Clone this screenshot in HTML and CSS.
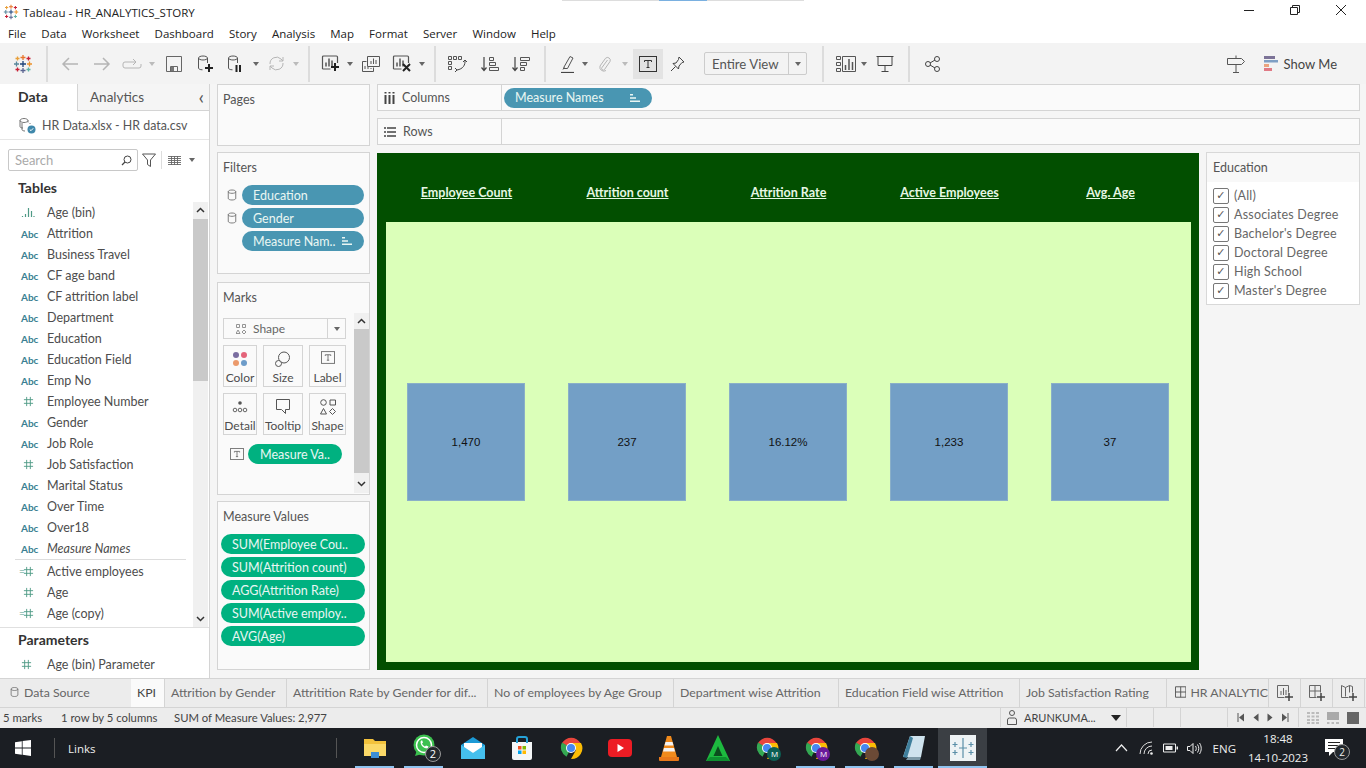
FILE: index.html
```html
<!DOCTYPE html>
<html lang="en">
<head>
    <meta charset="UTF-8">
    <title>Tableau - HR_ANALYTICS_STORY</title>
    <link rel="stylesheet" href="styles.css">
</head>
<body>
    <svg class="defs" width="0" height="0">
        <symbol id="logo" viewBox="0 0 20 20">
            <g fill="none" stroke-width="1.3">
                <path d="M10 1v5M7.5 3.5h5" stroke="#e8762d"/>
                <path d="M10 14v5M7.5 16.5h5" stroke="#5b6591"/>
                <path d="M3.5 7.5v5M1 10h5" stroke="#59879b"/>
                <path d="M16.5 7.5v5M14 10h5" stroke="#eb912b"/>
                <path d="M10 7v6M7 10h6" stroke="#1f447a"/>
                <path d="M4.5 2.5v4M2.5 4.5h4" stroke="#e8a03a"/>
                <path d="M15.5 2.5v4M13.5 4.5h4" stroke="#c72035"/>
                <path d="M4.5 13.5v4M2.5 15.5h4" stroke="#c72035"/>
                <path d="M15.5 13.5v4M13.5 15.5h4" stroke="#5fb1a5"/>
            </g>
        </symbol>
        <symbol id="cyl" viewBox="0 0 12 14">
            <path d="M1.5 3v8c0 1.2 2 2 4.5 2s4.5-.8 4.5-2V3M1.5 3c0-1.2 2-2 4.5-2s4.5.8 4.5 2-2 2-4.5 2-4.5-.8-4.5-2z" fill="none" stroke="currentColor"/>
        </symbol>
        <symbol id="hash" viewBox="0 0 12 12">
            <path d="M4 1v10M8 1v10M1 4h10M1 8h10" fill="none" stroke="currentColor"/>
        </symbol>
        <symbol id="tbox" viewBox="0 0 18 16">
            <rect x=".5" y=".5" width="17" height="15" fill="none" stroke="currentColor"/>
            <path d="M5.5 4.5h7M9 4.5v7M7.5 11.5h3M5.5 4.5V6M12.5 4.5V6" fill="none" stroke="currentColor"/>
        </symbol>
        <symbol id="sortpill" viewBox="0 0 12 10">
            <path d="M1 1h3v1.5H1zM1 4.2h6v1.5H1zM1 7.5h10V9H1z" fill="currentColor"/>
        </symbol>
        <symbol id="bars" viewBox="0 0 20 18">
            <path d="M1.5 14.5v-12a1 1 0 0 1 1-1h13a1 1 0 0 1 1 1v6M1.5 14.5h8" fill="none" stroke="#555" stroke-width="1.2"/>
            <path d="M5 12V8M8 12V4M11 12V6" fill="none" stroke="#555" stroke-width="1.5"/>
        </symbol>
        <symbol id="chrome" viewBox="0 0 24 24">
            <path d="M12 12L3 7a10.8 10.8 0 0 1 18.5 0H12z" fill="#e8453c"/>
            <path d="M12 12l-4.500 8.700A10.800 10.800 0 0 1 3 6.500z" fill="#34a853"/>
            <path d="M12 7h10a10.800 10.800 0 0 1-10 16l5-9z" fill="#fbbc05"/>
            <circle cx="12" cy="12" r="5" fill="#fff"/>
            <circle cx="12" cy="12" r="4" fill="#4688f1"/>
        </symbol>
    </svg>

    <header class="titlebar">
        <svg class="title-logo" width="16" height="16"><use href="#logo"/></svg>
        <span class="title-text">Tableau - HR_ANALYTICS_STORY</span>
        <div class="title-strip"><span></span></div>
        <div class="win-btns">
            <svg width="12" height="12" viewBox="0 0 12 12"><path d="M1 6.5h10" stroke="#222"/></svg>
            <svg width="12" height="12" viewBox="0 0 12 12"><path d="M1.5 3.5h7v7h-7zM3.5 3.5v-2h7v7h-2" fill="none" stroke="#222"/></svg>
            <svg width="12" height="12" viewBox="0 0 12 12"><path d="M1 1l10 10M11 1L1 11" stroke="#222"/></svg>
        </div>
    </header>

    <nav class="menubar">
        <span>File</span><span>Data</span><span>Worksheet</span><span>Dashboard</span><span>Story</span><span>Analysis</span><span>Map</span><span>Format</span><span>Server</span><span>Window</span><span>Help</span>
    </nav>

    <div class="toolbar">
        <div class="tool"><svg width="20" height="20"><use href="#logo"/></svg></div>
        <i class="sep sep-1"></i>
        <div class="tool dim"><svg width="18" height="14" viewBox="0 0 18 14"><path d="M17 7H2M8 1L2 7l6 6" fill="none" stroke="currentColor" stroke-width="1.5"/></svg></div>
        <div class="tool dim"><svg width="18" height="14" viewBox="0 0 18 14"><path d="M1 7h15M10 1l6 6-6 6" fill="none" stroke="currentColor" stroke-width="1.5"/></svg></div>
        <div class="tool w28 dim"><svg width="20" height="12" viewBox="0 0 20 12"><path d="M13 4H3a2 2 0 0 0-2 2v2a2 2 0 0 0 2 2h14a2 2 0 0 0 2-2V6M11 1l3 3-3 3" fill="none" stroke="currentColor"/></svg></div>
        <div class="tool w12 dim"><b class="caret"></b></div>
        <div class="tool"><svg width="16" height="16" viewBox="0 0 16 16"><path d="M.5.5h15v15H.5zM4.5 15.5v-5h7v5" fill="none" stroke="#666"/><path d="M5 11h3v4H5z" fill="#777"/></svg></div>
        <div class="tool"><svg width="18" height="18" viewBox="0 0 18 18"><path d="M1.5 3v10c0 1 1.5 1.8 4 1.8M10.5 3v5M1.5 3c0-1.100 2-2 4.5-2s4.5.9 4.5 2-2 2-4.5 2-4.5-.9-4.5-2z" fill="none" stroke="#555"/><path d="M12 9v8M8 13h8" stroke="#222" stroke-width="2"/></svg></div>
        <div class="tool w28"><svg width="18" height="18" viewBox="0 0 18 18"><path d="M1.5 3v10c0 1 1.5 1.8 4 1.8M10.5 3v5M1.5 3c0-1.100 2-2 4.5-2s4.5.9 4.5 2-2 2-4.5 2-4.5-.9-4.5-2z" fill="none" stroke="#555"/><path d="M9.500 10v7M13 10v7" stroke="#222" stroke-width="2"/></svg></div>
        <div class="tool w12"><b class="caret dark"></b></div>
        <div class="tool w28 dim"><svg width="17" height="17" viewBox="0 0 17 17"><path d="M2 9a6.500 6.500 0 0 1 11-5l2 2M15 8a6.500 6.500 0 0 1-11 5l-2-2M15 2v4h-4M2 15v-4h4" fill="none" stroke="currentColor"/></svg></div>
        <div class="tool w12 dim"><b class="caret"></b></div>
        <i class="sep"></i>
        <div class="tool w30"><svg width="20" height="19" viewBox="0 0 20 19"><use href="#bars"/><path d="M14 9v8M10 13h8" stroke="#222" stroke-width="2"/></svg></div>
        <div class="tool w8"><b class="caret dark"></b></div>
        <div class="tool w34"><svg width="18" height="18" viewBox="0 0 18 18"><path d="M5.5 1.5h12v10h-12zM.5 6.5h4M.5 6.5v10h11v-4" fill="none" stroke="#555"/><path d="M9 9V6M11.500 9V3.500M14 9V5M3 14v-3M6 14v-2M9 14v-1" stroke="#555"/></svg></div>
        <div class="tool w28"><svg width="20" height="19" viewBox="0 0 20 19"><use href="#bars"/><path d="M11 10l7 7M18 10l-7 7" stroke="#222" stroke-width="2"/></svg></div>
        <div class="tool w12"><b class="caret dark"></b></div>
        <i class="sep sep-3"></i>
        <div class="tool"><svg width="20" height="18" viewBox="0 0 20 18"><path d="M1.5 1.5h3v3h-3zM6.5 1.5h3v3h-3zM11.5 1.5h3v3h-3zM1.5 6.5h3v3h-3zM1.5 11.5h3v3h-3z" fill="none" stroke="#555"/><path d="M18 5c.5 5-2 9-8 10M8 13l2 2-2 2M16 7l2-2 2 2" fill="none" stroke="#444"/></svg></div>
        <div class="tool w34"><svg width="18" height="16" viewBox="0 0 18 16"><path d="M3 1v13M.5 11.5L3 14.5l2.500-3" fill="none" stroke="#444" stroke-width="1.2"/><path d="M8.5 1.5h4v3h-4zM8.5 6.5h6v3h-6zM8.5 11.5h9v3h-9z" fill="none" stroke="#555"/></svg></div>
        <div class="tool w28"><svg width="18" height="16" viewBox="0 0 18 16"><path d="M3 1v13M.5 11.5L3 14.5l2.500-3" fill="none" stroke="#444" stroke-width="1.2"/><path d="M8.5 1.5h9v3h-9zM8.5 6.5h6v3h-6zM8.5 11.5h4v3h-4z" fill="none" stroke="#555"/></svg></div>
        <i class="sep sep-4"></i>
        <div class="tool w26"><svg width="14" height="18" viewBox="0 0 14 18"><path d="M3 12L9 1.5l3 1.5-5.500 10.500H3zM3 12.500l-1 2" fill="none" stroke="#555"/><path d="M0 17.500h13" stroke="#444" stroke-width="1.2"/></svg></div>
        <div class="tool w8"><b class="caret dark"></b></div>
        <div class="tool w32 dim"><svg width="14" height="16" viewBox="0 0 14 16"><path d="M9.500 4L4 11.500a1.500 1.500 0 0 0 2.500 2L12 5.500a2.800 2.800 0 0 0-4.500-3.200L2 10a4 4 0 0 0 6 4.500" fill="none" stroke="currentColor"/></svg></div>
        <div class="tool w8 dim"><b class="caret"></b></div>
        <div class="tool w30 active"><svg width="18" height="16" class="ink"><use href="#tbox"/></svg></div>
        <div class="tool w28"><svg width="15" height="16" viewBox="0 0 15 16"><path d="M9 1l5 5-2 .5L9 10l-.5 3L3 7.500l3-.5L8.500 3.500zM5.500 10.500L1 15" fill="none" stroke="#444"/></svg></div>
        <div class="fit"><span>Entire View</span><div class="fit-arrow"><b class="caret dark"></b></div></div>
        <i class="sep sep-5"></i>
        <div class="tool w28"><svg width="20" height="16" viewBox="0 0 20 16"><path d="M.5.5h4v3h-4zM.5 6.500h4v3h-4zM.5 12.500h4v3h-4zM6.500.5h13v15h-13z" fill="none" stroke="#555"/><path d="M9.500 14V9M13 14V3M16.500 14V6" stroke="#555" stroke-width="1.5"/></svg></div>
        <div class="tool w8"><b class="caret dark"></b></div>
        <div class="tool w34"><svg width="18" height="17" viewBox="0 0 18 17"><path d="M.5 1.500h17M2 1.500v9h14v-9M9 10.500v6M5.500 16.500h7" fill="none" stroke="#444"/></svg></div>
        <i class="sep"></i>
        <div class="tool"><svg width="15" height="16" viewBox="0 0 15 16"><circle cx="3" cy="8" r="2.5" fill="none" stroke="#444"/><circle cx="12" cy="3" r="2.5" fill="none" stroke="#444"/><circle cx="12" cy="13" r="2.5" fill="none" stroke="#444"/><path d="M5 7l5-3M5 9l5 3" stroke="#444"/></svg></div>
        <div class="spacer"></div>
        <div class="tool"><svg width="18" height="18" viewBox="0 0 18 18"><path d="M9 .5v3M.5 3.500h14l3 3-3 3H.5zM9 9.500v8M6 17.500h6" fill="none" stroke="#555"/></svg></div>
        <div class="showme">
            <svg width="14" height="15" viewBox="0 0 14 15"><path d="M0 0h11v3H0z" fill="#7c7397"/><path d="M0 4h14v2.500H0z" fill="#7f9fc4"/><path d="M0 8h5v3H0z" fill="#eaa47f"/><path d="M0 12h8v3H0z" fill="#e07a85"/></svg>
            <span>Show Me</span>
        </div>
    </div>

    <main class="workspace">
        <aside class="data-pane">
            <div class="pane-tabs">
                <div class="pane-tab current">Data</div>
                <div class="pane-tab">Analytics<span class="collapse">&#8249;</span></div>
            </div>
            <div class="source">
                <svg width="17" height="17" viewBox="0 0 17 17"><path d="M1 3.5v6c0 1 1.5 1.500 3 1.500M9 3.500v2M1 3.500C1 2.500 2.800 1.500 5 1.500s4 1 4 2-1.800 2-4 2-4-1-4-2zM3 6v6.500c0 1 1.500 1.500 3 1.500M11 6v1" fill="none" stroke="#666" stroke-width=".9"/><circle cx="12.5" cy="12.5" r="4" fill="#3f88ab"/><path d="M10.800 12.500l1.200 1.200 2.200-2.400" fill="none" stroke="#fff"/></svg>
                <span>HR Data.xlsx - HR data.csv</span>
            </div>
            <div class="search-row">
                <div class="search"><span>Search</span><svg width="11" height="11" viewBox="0 0 11 11"><circle cx="6.5" cy="4.5" r="3.5" fill="none" stroke="#444"/><path d="M4 7l-3 3" stroke="#444" stroke-width="1.2"/></svg></div>
                <svg class="search-filter" width="14" height="14" viewBox="0 0 14 14"><path d="M.5 1h13L8.500 7v6.500l-3-2V7z" fill="none" stroke="#555"/></svg>
                <i class="search-sep"></i>
                <svg width="13" height="9" viewBox="0 0 13 9"><path d="M0 .5h13M0 2.500h13M0 4.500h13M0 6.500h13M0 8.500h13M3.500 0v9M6.500 0v9M9.500 0v9" stroke="#666" stroke-width=".9"/></svg>
                <b class="caret dark search-caret"></b>
            </div>
            <h2 class="pane-head">Tables</h2>
            <div class="fields-wrap">
                <ul class="fields">
                    <li><svg class="f-ico" width="14" height="11" viewBox="0 0 14 11"><path d="M1.500 10V9M4.500 10V7M7.500 10V1M10.500 10V4M13 10V9" stroke="#4f9a86" stroke-width="1.2"/></svg>Age (bin)</li>
                    <li><span class="abc">Abc</span>Attrition</li>
                    <li><span class="abc">Abc</span>Business Travel</li>
                    <li><span class="abc">Abc</span>CF age band</li>
                    <li><span class="abc">Abc</span>CF attrition label</li>
                    <li><span class="abc">Abc</span>Department</li>
                    <li><span class="abc">Abc</span>Education</li>
                    <li><span class="abc">Abc</span>Education Field</li>
                    <li><span class="abc">Abc</span>Emp No</li>
                    <li><svg class="f-ico" width="11" height="11"><use href="#hash"/></svg>Employee Number</li>
                    <li><span class="abc">Abc</span>Gender</li>
                    <li><span class="abc">Abc</span>Job Role</li>
                    <li><svg class="f-ico" width="11" height="11"><use href="#hash"/></svg>Job Satisfaction</li>
                    <li><span class="abc">Abc</span>Marital Status</li>
                    <li><span class="abc">Abc</span>Over Time</li>
                    <li><span class="abc">Abc</span>Over18</li>
                    <li class="last-dim"><span class="abc">Abc</span><em>Measure Names</em></li>
                    <li class="calc"><svg class="f-ico" width="11" height="11"><use href="#hash"/></svg>Active employees</li>
                    <li><svg class="f-ico" width="11" height="11"><use href="#hash"/></svg>Age</li>
                    <li class="calc"><svg class="f-ico" width="11" height="11"><use href="#hash"/></svg>Age (copy)</li>
                </ul>
                <div class="scroll">
                    <svg width="15" height="17" viewBox="0 0 15 17"><path d="M4 10l3.500-3.500L11 10" fill="none" stroke="#333" stroke-width="1.5"/></svg>
                    <div class="scroll-track"><div class="thumb-data"></div></div>
                    <svg width="15" height="17" viewBox="0 0 15 17"><path d="M4 7l3.500 3.500L11 7" fill="none" stroke="#333" stroke-width="1.5"/></svg>
                </div>
            </div>
            <div class="params">
                <h2 class="pane-head">Parameters</h2>
                <ul class="fields">
                    <li><svg class="f-ico" width="11" height="11"><use href="#hash"/></svg>Age (bin) Parameter</li>
                </ul>
            </div>
        </aside>

        <div class="cards">
            <section class="card card-pages"><h3>Pages</h3></section>
            <section class="card card-filters">
                <h3>Filters</h3>
                <div class="pill-row"><svg class="cyl" width="10" height="12"><use href="#cyl"/></svg><div class="pill blue">Education</div></div>
                <div class="pill-row"><svg class="cyl" width="10" height="12"><use href="#cyl"/></svg><div class="pill blue">Gender</div></div>
                <div class="pill-row indent"><div class="pill blue"><span>Measure Nam..</span><svg width="12" height="10"><use href="#sortpill"/></svg></div></div>
            </section>
            <section class="card card-marks">
                <h3>Marks</h3>
                <div class="marks-body">
                    <div class="marks-main">
                        <div class="mark-type">
                            <svg width="10" height="10" viewBox="0 0 10 10"><path d="M.5.5h3v3h-3zM6.500.5h3v3h-3zM2 6l2 3.500H0zM8 6l2 2-2 2-2-2z" fill="none" stroke="#888" stroke-width=".9"/></svg>
                            <span>Shape</span>
                            <div class="mark-arrow"><b class="caret dark"></b></div>
                        </div>
                        <div class="mark-grid">
                            <div class="mark-btn">
                                <svg width="16" height="16" viewBox="0 0 16 16"><circle cx="4" cy="4" r="3" fill="#7a6da0"/><circle cx="12" cy="4" r="3" fill="#e4647a"/><circle cx="4" cy="12" r="3" fill="#eb9a6c"/><circle cx="12" cy="12" r="3" fill="#6d9cc9"/></svg>
                                <span>Color</span>
                            </div>
                            <div class="mark-btn">
                                <svg width="16" height="16" viewBox="0 0 16 16"><circle cx="9" cy="6.5" r="5.5" fill="#fafafa" stroke="#555"/><circle cx="3.5" cy="12.5" r="3" fill="#fafafa" stroke="#555"/></svg>
                                <span>Size</span>
                            </div>
                            <div class="mark-btn">
                                <svg width="14" height="13" class="ink-soft"><use href="#tbox"/></svg>
                                <span>Label</span>
                            </div>
                            <div class="mark-btn">
                                <svg width="16" height="16" viewBox="0 0 16 16"><circle cx="8" cy="4" r="1.8" fill="#555"/><circle cx="3" cy="11" r="1.8" fill="none" stroke="#555" stroke-width=".9"/><circle cx="8" cy="11" r="1.8" fill="none" stroke="#555" stroke-width=".9"/><circle cx="13" cy="11" r="1.8" fill="none" stroke="#555" stroke-width=".9"/></svg>
                                <span>Detail</span>
                            </div>
                            <div class="mark-btn">
                                <svg width="15" height="15" viewBox="0 0 15 15"><path d="M.5.5h13v10h-4v4l-4-4h-5z" fill="none" stroke="#555"/></svg>
                                <span>Tooltip</span>
                            </div>
                            <div class="mark-btn">
                                <svg width="16" height="16" viewBox="0 0 16 16"><circle cx="3.5" cy="3.5" r="2.8" fill="none" stroke="#555"/><path d="M10 1h5.500v5H10zM3.500 9.500l3 5.500h-6zM12.500 9.500l3 3-3 3-3-3z" fill="none" stroke="#555"/></svg>
                                <span>Shape</span>
                            </div>
                        </div>
                        <div class="mark-pill">
                            <svg width="14" height="12" class="ink-soft"><use href="#tbox"/></svg>
                            <div class="pill green">Measure Va..</div>
                        </div>
                    </div>
                    <div class="scroll">
                        <svg width="15" height="16" viewBox="0 0 15 16"><path d="M4 10l3.500-3.500L11 10" fill="none" stroke="#333" stroke-width="1.5"/></svg>
                        <div class="scroll-track"><div class="thumb-marks"></div></div>
                        <svg width="15" height="20" viewBox="0 0 15 20"><path d="M4 9l3.500 3.500L11 9" fill="none" stroke="#333" stroke-width="1.5"/></svg>
                    </div>
                </div>
            </section>
            <section class="card card-values">
                <h3>Measure Values</h3>
                <div class="pill green">SUM(Employee Cou..</div>
                <div class="pill green">SUM(Attrition count)</div>
                <div class="pill green">AGG(Attrition Rate)</div>
                <div class="pill green">SUM(Active employ..</div>
                <div class="pill green">AVG(Age)</div>
            </section>
        </div>

        <div class="sheet">
            <div class="shelf">
                <div class="shelf-label">
                    <svg width="11" height="12" viewBox="0 0 11 12"><path d="M1.5 3v9M5.500 3v9M9.500 3v9" stroke="#444" stroke-width="2"/><path d="M1.500 0v1.500M5.500 0v1.500M9.500 0v1.500" stroke="#444" stroke-width="2"/></svg>
                    <span>Columns</span>
                </div>
                <div class="pill blue shelf-pill"><span>Measure Names</span><svg width="12" height="10"><use href="#sortpill"/></svg></div>
            </div>
            <div class="shelf">
                <div class="shelf-label">
                    <svg width="12" height="10" viewBox="0 0 12 10"><path d="M0 1h2M3 1h9M0 5h2M3 5h9M0 9h2M3 9h9" stroke="#444" stroke-width="1.5"/></svg>
                    <span>Rows</span>
                </div>
            </div>
            <div class="view-row">
                <div class="viz">
                    <div class="viz-heads">
                        <div>Employee Count</div>
                        <div>Attrition count</div>
                        <div>Attrition Rate</div>
                        <div>Active Employees</div>
                        <div>Avg. Age</div>
                    </div>
                    <div class="viz-plot">
                        <div class="mark">1,470</div>
                        <div class="mark">237</div>
                        <div class="mark">16.12%</div>
                        <div class="mark">1,233</div>
                        <div class="mark">37</div>
                    </div>
                </div>
                <div class="legend">
                    <div class="legend-head">Education</div>
                    <ul class="legend-list">
                        <li>(All)</li>
                        <li>Associates Degree</li>
                        <li>Bachelor's Degree</li>
                        <li>Doctoral Degree</li>
                        <li>High School</li>
                        <li>Master's Degree</li>
                    </ul>
                </div>
            </div>
        </div>
    </main>

    <div class="tabs">
        <div class="tab tab-source"><svg width="9" height="12" class="tab-cyl"><use href="#cyl"/></svg>Data Source</div>
        <div class="tab tab-kpi">KPI</div>
        <div class="tab tab-a">Attrition by Gender</div>
        <div class="tab tab-b">Attritition Rate by Gender for dif...</div>
        <div class="tab tab-c">No of employees by Age Group</div>
        <div class="tab tab-d">Department wise Attrition</div>
        <div class="tab tab-e">Education Field wise Attrition</div>
        <div class="tab tab-f">Job Satisfaction Rating</div>
        <div class="tab tab-g"><svg width="12" height="12" viewBox="0 0 12 12"><path d="M.5.5h11v11H.5zM6 .5v11M.5 6h11" fill="none" stroke="#555"/></svg><span>HR ANALYTIC</span></div>
        <div class="tab tab-new"><svg width="18" height="17" viewBox="0 0 18 17"><path d="M1.5 13.5v-12h11v7M1.5 13.5h7" fill="none" stroke="#666"/><path d="M5 11V7M7.500 11V4M10 11V6" stroke="#666"/><path d="M13 9v8M9 13h8" stroke="#444" stroke-width="1.5"/></svg></div>
        <div class="tab tab-new"><svg width="18" height="17" viewBox="0 0 18 17"><path d="M1.5 13.5v-12h11v7M1.5 13.5h7M7 1.5v12M1.5 7h11" fill="none" stroke="#666"/><path d="M13 9v8M9 13h8" stroke="#444" stroke-width="1.5"/></svg></div>
        <div class="tab tab-new"><svg width="18" height="17" viewBox="0 0 18 17"><path d="M1.5 13.5v-12l4 2 4-2 3 1v6M1.5 13.5h7M5.5 3.5v9M9.5 1.5v7" fill="none" stroke="#666"/><path d="M13 9v8M9 13h8" stroke="#444" stroke-width="1.5"/></svg></div>
    </div>

    <div class="statusbar">
        <span class="st-marks">5 marks</span>
        <span class="st-rows">1 row by 5 columns</span>
        <span class="st-sum">SUM of Measure Values: 2,977</span>
        <div class="spacer"></div>
        <div class="st-user">
            <svg width="10" height="15" viewBox="0 0 10 15"><circle cx="5" cy="3" r="2.5" fill="none" stroke="#555"/><path d="M.5 14.5V10a2 2 0 0 1 2-2h5a2 2 0 0 1 2 2v4.500z" fill="none" stroke="#555"/></svg>
            <span>ARUNKUMA...</span>
            <b class="caret black"></b>
        </div>
        <div class="st-cell c27"></div>
        <div class="st-cell c27"></div>
        <div class="st-cell c47"></div>
        <div class="st-nav">
            <svg width="8" height="9" viewBox="0 0 8 9"><path d="M1 0v9" stroke="#555"/><path d="M7 .5v8L2 4.5z" fill="#555"/></svg>
            <svg width="8" height="9" viewBox="0 0 8 9"><path d="M6.5.5v8L1.5 4.5z" fill="#555"/></svg>
            <svg width="8" height="9" viewBox="0 0 8 9"><path d="M1.5.5v8l5-4z" fill="#555"/></svg>
            <svg width="8" height="9" viewBox="0 0 8 9"><path d="M7 0v9" stroke="#555"/><path d="M1 .5v8l5-4z" fill="#555"/></svg>
        </div>
        <div class="st-views">
            <svg width="12" height="12" viewBox="0 0 12 12"><path d="M0 1h3M4.500 1h3M9 1h3M0 4.500h3M4.500 4.500h3M9 4.500h3M0 8h3M4.500 8h3M9 8h3M0 11h3M4.500 11h3M9 11h3" stroke="#bbb" stroke-width="2"/></svg>
            <svg width="12" height="12" viewBox="0 0 12 12"><path d="M0 0h12v8H0z" fill="#aaa"/><path d="M0 10h2.500v2H0zM4.500 10H7v2H4.500zM9 10h3v2H9z" fill="#bbb"/></svg>
            <svg width="12" height="12" viewBox="0 0 12 12"><path d="M0 0h12v12H0z" fill="#666"/></svg>
        </div>
    </div>

    <footer class="taskbar">
        <svg class="win-logo" width="16" height="16" viewBox="0 0 16 16"><path d="M0 2.200l6.800-1V7.600H0zM7.600 1.100L16 0v7.600H7.600zM0 8.400h6.800v6.400l-6.800-1zM7.600 8.400H16V16l-8.400-1.200z" fill="#fff"/></svg>
        <i class="tb-sep"></i>
        <span class="links">Links</span>
        <i class="tb-sep tb-sep-2"></i>
        <div class="apps">
            <div class="app open"><svg width="22" height="20" viewBox="0 0 22 20"><path d="M0 1h9l2 2h11v15H0z" fill="#f3c23c"/><path d="M0 6h22v12H0z" fill="#fbd968"/><path d="M7 14h8v6H7z" fill="#3d8ed4"/></svg></div>
            <div class="app open"><svg class="wa" width="30" height="30" viewBox="0 0 30 30"><circle cx="12" cy="12" r="10.5" fill="#3cc04f"/><path d="M3 23l2-6 5 4z" fill="#3cc04f"/><circle cx="12" cy="12" r="7.5" fill="none" stroke="#fff" stroke-width="1.5"/><path d="M8.500 8.500c0 4 3 7 7 7l1-2-2.500-1-1 1c-1.500-.6-2.300-1.500-3-3l1-1-1-2.500z" fill="#fff"/><circle cx="21" cy="21" r="7.5" fill="#23282d" stroke="#999"/><text x="21" y="25" class="badge-num">2</text></svg></div>
            <div class="app"><svg width="24" height="22" viewBox="0 0 24 22"><path d="M0 8L12 0l12 8v14H0z" fill="#1c9ad6"/><path d="M0 8l12 8 12-8v14H0z" fill="#45c0ee"/><path d="M3 6h18v4l-9 6-9-6z" fill="#fff"/></svg></div>
            <div class="app"><svg width="22" height="24" viewBox="0 0 22 24"><path d="M1 6h20v16a2 2 0 0 1-2 2H3a2 2 0 0 1-2-2z" fill="#f4f6f7"/><path d="M6 7V3a2 2 0 0 1 2-2h6a2 2 0 0 1 2 2v4" fill="none" stroke="#25a2d8" stroke-width="2"/><path d="M7 10h3.500v3.500H7z" fill="#f25022"/><path d="M11.500 10H15v3.500h-3.500z" fill="#7fba00"/><path d="M7 14.500h3.500V18H7z" fill="#00a4ef"/><path d="M11.500 14.500H15V18h-3.500z" fill="#ffb900"/></svg></div>
            <div class="app"><svg width="24" height="24"><use href="#chrome"/></svg></div>
            <div class="app"><svg width="24" height="18" viewBox="0 0 24 18"><rect width="24" height="18" rx="4" fill="#ed1c24"/><path d="M9.500 5v8l6.500-4z" fill="#fff"/></svg></div>
            <div class="app"><svg width="20" height="26" viewBox="0 0 20 26"><path d="M8 1h4l6 21H2z" fill="#f08a1c"/><path d="M6.500 7h7l1 3.500h-9zM5 13h10l1 3.500H4z" fill="#f4f4f4"/><path d="M0 22h20v3a1 1 0 0 1-1 1H1a1 1 0 0 1-1-1z" fill="#e8781a"/></svg></div>
            <div class="app"><svg width="24" height="26" viewBox="0 0 24 26"><path d="M12 0l12 26H0z" fill="#1dba3f"/><path d="M12 11l4.500 10h-9z" fill="#0b4d1d"/><path d="M0 26l4-4h16l4 4z" fill="#0e8f2f"/></svg></div>
            <div class="app"><svg width="24" height="24"><use href="#chrome"/></svg><b class="avatar teal">M</b></div>
            <div class="app open"><svg width="24" height="24"><use href="#chrome"/></svg><b class="avatar purple">M</b></div>
            <div class="app open"><svg width="24" height="24"><use href="#chrome"/></svg><b class="avatar photo"></b></div>
            <div class="app open"><svg width="24" height="26" viewBox="0 0 24 26"><path d="M8 1h15l-4 21H1z" fill="#cfe3ee"/><path d="M1 22L8 1l3 2-6 20z" fill="#3f7f9c"/><path d="M6 22h13l-1 3H4z" fill="#7e9aa8"/></svg></div>
            <div class="app current"><div class="tableau-tile"><svg width="26" height="26" viewBox="0 0 26 26"><path d="M13 3v20M9 13h8M5 7v5M2.500 9.500h5M21 7v5M18.500 9.500h5M5 15v5M2.500 17.500h5M21 15v5M18.500 17.500h5" fill="none" stroke="#5b8fa8" stroke-width="1.2"/></svg></div></div>
        </div>
        <div class="spacer"></div>
        <div class="tray">
            <svg class="tray-up" width="13" height="8" viewBox="0 0 13 8"><path d="M1 7l5.500-6L12 7" fill="none" stroke="#eee" stroke-width="1.2"/></svg>
            <svg width="15" height="14" viewBox="0 0 15 14"><path d="M1 13A12 12 0 0 1 13 1M5 13a8 8 0 0 1 8-8M9 13a4 4 0 0 1 4-4" fill="none" stroke="#ddd"/><circle cx="12.5" cy="12.5" r="1.3" fill="#eee"/></svg>
            <svg width="15" height="10" viewBox="0 0 15 10"><path d="M.5 1h12v8H.5z" fill="none" stroke="#eee"/><path d="M2.500 3h7v4h-7z" fill="#eee"/><path d="M13.500 3.500H15v3h-1.500z" fill="#eee"/></svg>
            <svg width="15" height="13" viewBox="0 0 15 13"><path d="M.5 4.500H3l3-3v10l-3-3H.5zM8.500 4c1 1.500 1 3.500 0 5M10.500 2.500c1.700 2.500 1.700 5.500 0 8M12.500 1c2.300 3.500 2.300 7.500 0 11" fill="none" stroke="#eee"/></svg>
            <span class="tray-lang">ENG</span>
            <div class="clock"><span>18:48</span><span>14-10-2023</span></div>
            <div class="notify">
                <svg width="18" height="18" viewBox="0 0 18 18"><path d="M0 0h18v13H8l-4 4v-4H0z" fill="#fff"/><path d="M3 3.500h12M3 6.500h12M3 9.500h8" stroke="#222"/></svg>
                <b class="notify-badge">2</b>
            </div>
        </div>
    </footer>
</body>
</html>
```
FILE: styles.css
```css
* {
    box-sizing: border-box;
}
html, body {
    margin: 0;
    padding: 0;
}
body {
    width: 1366px;
    height: 768px;
    overflow: hidden;
    display: flex;
    flex-direction: column;
    background-color: #f5f5f5;
    font-family: 'Lato', sans-serif;
    font-size: 12.5px;
    color: #4d4d4d;
}
ul {
    list-style: none;
    margin: 0;
    padding: 0;
}
h2, h3 {
    margin: 0;
}
.defs {
    position: absolute;
}
.spacer {
    flex: 1;
}

/* window chrome */
.titlebar {
    position: relative;
    height: 23px;
    background-color: white;
    display: flex;
    align-items: center;
    padding-left: 3px;
    font-family: 'Open Sans', sans-serif;
    font-size: 11.5px;
    color: #222;
}
.title-logo {
    margin-right: 4px;
}
.title-text {
    padding-top: 1px;
}
.title-strip {
    position: absolute;
    left: 562px;
    top: 0;
    width: 242px;
    height: 1px;
    background-color: #ddd;
}
.title-strip span {
    display: block;
    width: 48px;
    height: 1px;
    margin-left: 97px;
    background-color: #7ab0e0;
}
.win-btns {
    margin-left: auto;
    display: flex;
    gap: 34px;
    margin-right: 19px;
    margin-top: -3px;
}
.menubar {
    height: 20px;
    background-color: white;
    display: flex;
    align-items: center;
    gap: 15.1px;
    padding-left: 8px;
    font-family: 'Open Sans', sans-serif;
    font-size: 11.5px;
    color: #222;
}

/* toolbar */
.toolbar {
    height: 41px;
    display: flex;
    align-items: center;
    padding-left: 7px;
    padding-right: 29px;
    background-color: #f3f3f3;
}
.tool {
    width: 32px;
    height: 30px;
    flex: none;
    display: flex;
    align-items: center;
    justify-content: center;
    color: #555;
}
.tool.dim {
    color: #b5b5b5;
}
.w8 { width: 8px; }
.w12 { width: 12px; }
.w26 { width: 26px; }
.w28 { width: 28px; }
.w30 { width: 30px; }
.w34 { width: 34px; }
.tool.active {
    margin-left: 4px;
    background-color: #e3e3e3;
}
.ink {
    color: #333;
}
.ink-soft {
    color: #555;
}
.caret {
    display: block;
    width: 0;
    height: 0;
    border-left: 3.5px solid transparent;
    border-right: 3.5px solid transparent;
    border-top: 4px solid #bbb;
}
.caret.dark {
    border-top-color: #666;
}
.caret.black {
    border-left-width: 5px;
    border-right-width: 5px;
    border-top: 6px solid #222;
}
.sep {
    width: 2px;
    height: 36px;
    flex: none;
    margin: 0 6px;
    background-color: #dcdcdc;
}
.sep-1 {
    margin: 0 6px 0 7px;
}
.sep-3 {
    margin: 0 5px 0 6px;
}
.sep-4 {
    margin: 0 9px;
}
.sep-5 {
    margin: 0 8px 0 15px;
}
.fit {
    width: 103px;
    height: 23px;
    margin-left: 13px;
    display: flex;
    align-items: center;
    border: 1px solid #ccc;
    border-radius: 2px;
    font-size: 13.2px;
    color: #555;
}
.fit span {
    flex: 1;
    padding-left: 7px;
}
.fit-arrow {
    width: 18px;
    height: 100%;
    border-left: 1px solid #ccc;
    display: flex;
    align-items: center;
    justify-content: center;
}
.showme {
    margin-left: 12px;
    display: flex;
    align-items: center;
    gap: 6px;
    font-size: 13px;
    color: #444;
}

/* main area */
.workspace {
    height: 594px;
    display: flex;
    background-color: #f5f5f5;
}
.data-pane {
    width: 210px;
    flex: none;
    display: flex;
    flex-direction: column;
    background-color: white;
    border-right: 1px solid #d4d4d4;
}
.pane-tabs {
    height: 27px;
    display: flex;
    background-color: #f5f5f5;
}
.pane-tab {
    flex: 1;
    position: relative;
    padding: 5px 0 0 12px;
    font-size: 13.5px;
    color: #555;
    border-bottom: 1px solid #d4d4d4;
}
.pane-tab.current {
    flex: none;
    width: 78px;
    padding: 4px 0 0 18px;
    font-size: 14px;
    font-weight: 700;
    color: #333;
    background-color: white;
    border-bottom: none;
    border-right: 1px solid #d4d4d4;
}
.collapse {
    position: absolute;
    right: 5px;
    top: 0;
    font-size: 20px;
    line-height: 24px;
    color: #555;
}
.source {
    height: 29px;
    display: flex;
    align-items: center;
    gap: 6px;
    padding-left: 19px;
    border-bottom: 1px solid #e6e6e6;
    font-size: 12.4px;
    color: #555;
}
.search-row {
    height: 39px;
    flex: none;
    display: flex;
    align-items: center;
    padding: 1px 0 0 8px;
}
.search {
    width: 130px;
    height: 22px;
    display: flex;
    align-items: center;
    justify-content: space-between;
    padding: 0 5px 0 6px;
    border: 1px solid #c8c8c8;
    border-radius: 2px;
    font-size: 13px;
    color: #aaa;
}
.search-filter {
    margin-left: 4px;
}
.search-sep {
    width: 1px;
    height: 18px;
    margin: 0 6px 0 5px;
    background-color: #ddd;
}
.search-caret {
    margin-left: 8px;
}
.pane-head {
    padding-left: 18px;
    font-size: 14px;
    font-weight: 700;
    color: #333;
    line-height: 18px;
}
.fields-wrap {
    height: 426px;
    margin-top: 5px;
    padding-right: 1px;
    display: flex;
    justify-content: space-between;
    border-bottom: 1px solid #e0e0e0;
}
.fields li {
    height: 21px;
    position: relative;
    padding-left: 47px;
    line-height: 21px;
    white-space: nowrap;
    color: #4d4d4d;
}
.abc {
    position: absolute;
    left: 21px;
    top: 1px;
    font-size: 10px;
    font-weight: 700;
    color: #3a7f92;
}
.f-ico {
    position: absolute;
    left: 23px;
    top: 5px;
    color: #4f9a86;
}
.fields li:first-child .f-ico {
    left: 21px;
}
.calc::before {
    content: "=";
    position: absolute;
    left: 19px;
    top: 0;
    font-size: 10px;
    color: #4f9a86;
}
.last-dim {
    margin-bottom: 2px;
}
.last-dim::after {
    content: "";
    position: absolute;
    left: 15px;
    top: 21px;
    width: 171px;
    height: 1px;
    background-color: #ddd;
}
.scroll {
    width: 15px;
    flex: none;
    display: flex;
    flex-direction: column;
    background-color: #f0f0f0;
}
.scroll svg {
    flex: none;
}
.scroll-track {
    flex: 1;
}
.thumb-data {
    height: 162px;
    background-color: #c9c9c9;
}
.thumb-marks {
    height: 144px;
    background-color: #c9c9c9;
}
.params {
    padding-top: 3px;
}
.params .fields {
    margin-top: 5px;
}

/* cards column */
.cards {
    width: 153px;
    flex: none;
    margin: 0 7px;
    display: flex;
    flex-direction: column;
}
.card {
    border: 1px solid #d4d4d4;
    background-color: #fafafa;
    padding: 0 5px;
}
.card h3 {
    font-size: 12.5px;
    font-weight: 400;
    color: #555;
    padding-top: 7px;
    line-height: 16px;
}
.card-pages {
    height: 62px;
}
.card-filters {
    height: 122px;
    margin-top: 6px;
}
.card-filters h3 {
    margin-bottom: 9px;
}
.card-marks {
    height: 213px;
    margin-top: 8px;
    padding-right: 1px;
}
.card-values {
    height: 169px;
    margin-top: 6px;
    padding: 0 4px 0 3px;
}
.card-values h3 {
    padding-left: 2px;
    margin-bottom: 9px;
}
.pill {
    height: 20px;
    margin-bottom: 3px;
    border-radius: 10px;
    display: flex;
    align-items: center;
    justify-content: space-between;
    padding: 0 11px;
    color: #e9f6f3;
    white-space: nowrap;
}
.blue {
    background-color: #4996b2;
}
.green {
    background-color: #00b180;
}
.pill-row {
    display: flex;
    align-items: flex-start;
}
.pill-row .pill {
    width: 123px;
}
.pill-row.indent {
    padding-left: 19px;
}
.cyl {
    margin: 4px 5px 0 4px;
    color: #666;
    flex: none;
}
.marks-body {
    display: flex;
    margin-top: 7px;
    gap: 8px;
}
.marks-main {
    width: 123px;
    flex: none;
    padding-top: 5px;
}
.marks-body .scroll {
    height: 180px;
}
.mark-type {
    height: 21px;
    display: flex;
    align-items: center;
    border: 1px solid #d4d4d4;
    color: #666;
    font-size: 12px;
    background-color: #fafafa;
    padding-left: 12px;
}
.mark-type span {
    flex: 1;
    padding-left: 7px;
}
.mark-arrow {
    width: 18px;
    height: 100%;
    border-left: 1px solid #d4d4d4;
    display: flex;
    align-items: center;
    justify-content: center;
}
.mark-grid {
    display: grid;
    grid-template-columns: 34px 40px 37px;
    grid-auto-rows: 42px;
    column-gap: 6px;
    row-gap: 6px;
    margin-top: 6px;
}
.mark-btn {
    display: flex;
    flex-direction: column;
    align-items: center;
    justify-content: space-between;
    padding: 5px 0 2px;
    border: 1px solid #d4d4d4;
    font-size: 12px;
    color: #4d4d4d;
    line-height: 13px;
}
.mark-pill {
    display: flex;
    align-items: center;
    margin-top: 9px;
    padding-left: 7px;
}
.mark-pill .pill {
    width: 94px;
    margin: 0 0 0 4px;
    justify-content: center;
}
.sheet {
    flex: 1;
    min-width: 0;
    padding-right: 6px;
    display: flex;
    flex-direction: column;
}
.shelf {
    height: 27px;
    flex: none;
    display: flex;
    align-items: center;
    margin-bottom: 7px;
    border: 1px solid #d4d4d4;
    background-color: #fafafa;
}
.shelf-label {
    width: 124px;
    height: 100%;
    flex: none;
    display: flex;
    align-items: center;
    gap: 7px;
    padding-left: 6px;
    border-right: 1px solid #d4d4d4;
    color: #555;
}
.shelf-pill {
    width: 148px;
    margin: 0 0 0 2px;
}
.view-row {
    display: flex;
    align-items: flex-start;
    margin-top: 1px;
}
.viz {
    width: 822px;
    height: 517px;
    flex: none;
    padding: 0 8px 8px 9px;
    display: flex;
    flex-direction: column;
    background-color: #024f00;
}
.viz-heads {
    height: 69px;
    flex: none;
    display: grid;
    grid-template-columns: repeat(5, 161px);
    align-items: center;
    padding-top: 9px;
    text-align: center;
    font-size: 12.5px;
    font-weight: 700;
    color: #e6f7e4;
    text-decoration: underline;
}
.viz-plot {
    flex: 1;
    display: grid;
    grid-template-columns: repeat(5, 161px);
    justify-items: center;
    align-items: center;
    background-color: #dbffb9;
}
.mark {
    width: 118px;
    height: 118px;
    margin-right: 1px;
    display: flex;
    align-items: center;
    justify-content: center;
    background-color: #739fc6;
    border: 1px solid #8aafc8;
    font-family: 'Liberation Sans', sans-serif;
    font-size: 11.5px;
    color: #111;
}
.legend {
    width: 154px;
    height: 153px;
    margin-left: 7px;
    margin-top: -1px;
    background-color: white;
    border: 1px solid #d8d8d8;
}
.legend-head {
    height: 29px;
    padding: 7px 0 0 6px;
    background-color: #f8f8f8;
    color: #555;
}
.legend-list {
    padding: 4px 0 0 6px;
}
.legend-list li {
    height: 19px;
    display: flex;
    align-items: center;
    line-height: 19px;
    letter-spacing: .2px;
    color: #666;
}
.legend-list li::before {
    content: "✓";
    width: 14px;
    height: 14px;
    margin-right: 5px;
    flex: none;
    display: flex;
    align-items: center;
    justify-content: center;
    border: 1px solid #777;
    border-radius: 2px;
    font-family: 'DejaVu Sans', sans-serif;
    font-size: 11px;
    color: #555;
}

/* sheet tabs */
.tabs {
    height: 30px;
    flex: none;
    display: flex;
    border-top: 1px solid #d4d4d4;
    border-bottom: 1px solid #d4d4d4;
    background-color: #ececec;
    font-size: 12.3px;
}
.tab {
    height: 100%;
    flex: none;
    display: flex;
    align-items: center;
    padding: 0 0 2px 6px;
    border-right: 1px solid #d4d4d4;
    color: #666;
    white-space: nowrap;
    overflow: hidden;
}
.tab-source {
    width: 131px;
    padding-left: 10px;
    border-right: none;
}
.tab-cyl {
    margin-right: 5px;
    color: #666;
}
.tab-kpi {
    width: 34px;
    color: #444;
    background-color: #fafafa;
}
.tab-a { width: 122px; }
.tab-b { width: 201px; }
.tab-c { width: 186px; }
.tab-d { width: 165px; }
.tab-e { width: 181px; }
.tab-f { width: 147px; }
.tab-g {
    width: 102px;
    gap: 4px;
    padding-left: 8px;
}
.tab-new {
    width: 32px;
    padding-left: 7px;
}

/* status bar */
.statusbar {
    height: 20px;
    flex: none;
    display: flex;
    align-items: center;
    padding: 0 0 1px 3px;
    background-color: #ececec;
    font-size: 11.3px;
    color: #444;
}
.st-marks { width: 58px; }
.st-rows { width: 113px; }
.st-user {
    width: 126px;
    height: 100%;
    display: flex;
    align-items: center;
    gap: 7px;
    padding-left: 6px;
    border-left: 1px solid #d4d4d4;
    font-size: 11px;
}
.st-user span {
    width: 80px;
}
.st-cell {
    height: 100%;
    border-left: 1px solid #d4d4d4;
}
.c27 { width: 27px; }
.c47 { width: 47px; }
.st-nav {
    width: 71px;
    height: 100%;
    display: flex;
    align-items: center;
    justify-content: space-around;
    padding: 0 6px;
    border-left: 1px solid #d4d4d4;
}
.st-views {
    width: 68px;
    height: 100%;
    display: flex;
    align-items: center;
    gap: 8px;
    padding-left: 8px;
    border-left: 1px solid #d4d4d4;
}

/* windows taskbar */
.taskbar {
    height: 40px;
    flex: none;
    display: flex;
    align-items: center;
    background-color: #1b1e23;
    color: #eee;
    font-family: 'Open Sans', sans-serif;
    font-size: 11.5px;
}
.win-logo {
    margin-left: 15px;
}
.tb-sep {
    width: 1px;
    height: 20px;
    margin-left: 23px;
    background-color: #555;
}
.links {
    margin-left: 13px;
}
.tb-sep-2 {
    margin-left: 241px;
}
.apps {
    display: flex;
    margin-left: 13px;
    height: 100%;
}
.app {
    position: relative;
    width: 49px;
    height: 100%;
    display: flex;
    align-items: center;
    justify-content: center;
}
.app.open::after {
    content: "";
    position: absolute;
    left: 5px;
    right: 5px;
    bottom: 0;
    height: 2px;
    background-color: #8fc3ef;
}
.app.current {
    background-color: #3b3f44;
}
.app.current::after {
    content: "";
    position: absolute;
    left: 0;
    right: 0;
    bottom: 0;
    height: 2px;
    background-color: #8fc3ef;
}
.wa {
    margin-left: 6px;
}
.tableau-tile {
    width: 26px;
    height: 26px;
    background-color: #eef3f5;
}
.badge-num {
    font-family: 'Open Sans', sans-serif;
    font-size: 11px;
    fill: #fff;
    text-anchor: middle;
}
.avatar {
    position: absolute;
    right: 10px;
    bottom: 7px;
    width: 14px;
    height: 14px;
    border-radius: 50%;
    font-size: 8px;
    font-weight: 400;
    line-height: 14px;
    text-align: center;
    color: white;
}
.teal { background-color: #0d5f54; }
.purple { background-color: #6a1b9a; }
.photo { background-color: #6b4a36; }
.tray {
    display: flex;
    align-items: center;
    gap: 9px;
    padding-right: 16px;
}
.tray-up {
    margin-right: 2px;
}
.tray-lang {
    margin-left: 2px;
}
.clock {
    width: 62px;
    margin-left: 2px;
    display: flex;
    flex-direction: column;
    align-items: center;
    line-height: 19px;
    white-space: nowrap;
}
.notify {
    position: relative;
    width: 32px;
    display: flex;
    justify-content: center;
}
.notify-badge {
    position: absolute;
    right: 0;
    top: 5px;
    width: 16px;
    height: 16px;
    border-radius: 50%;
    background-color: #23282d;
    border: 1px solid #999;
    font-size: 10px;
    font-weight: 400;
    line-height: 14px;
    text-align: center;
}
```
